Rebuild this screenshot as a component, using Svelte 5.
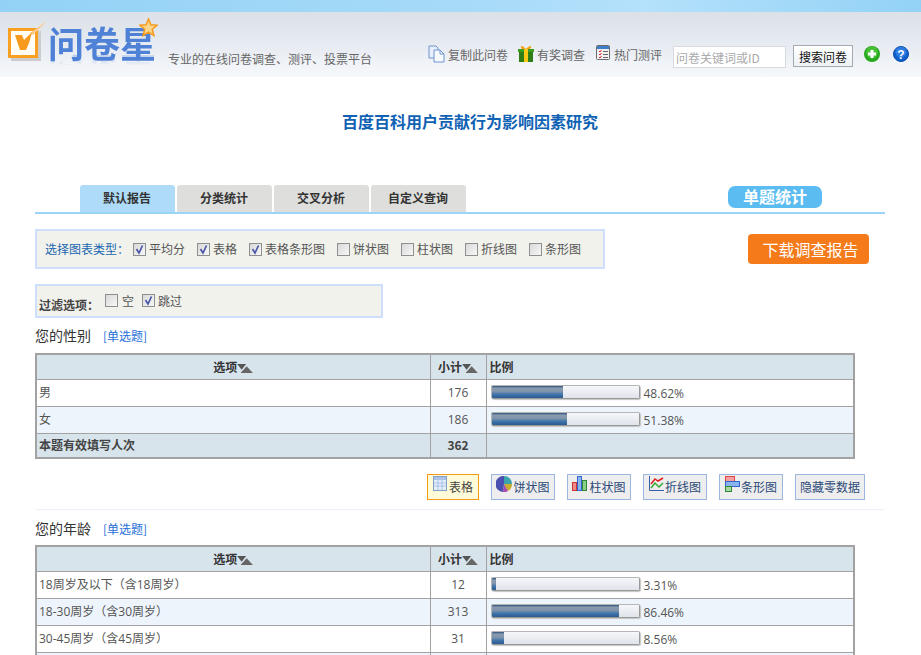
<script>
  const tabs = ['默认报告', '分类统计', '交叉分析', '自定义查询'];
  const types = [
    ['平均分', true], ['表格', true], ['表格条形图', true], ['饼状图', false],
    ['柱状图', false], ['折线图', false], ['条形图', false]
  ];
  const q1 = [['男', 176, 48.62], ['女', 186, 51.38]];
  const q2 = [
    ['18周岁及以下（含18周岁）', 12, 3.31],
    ['18-30周岁（含30周岁）', 313, 86.46],
    ['30-45周岁（含45周岁）', 31, 8.56]
  ];
</script>

{#snippet check(on)}
  <span class="cb">
    {#if on}
      <svg viewBox="0 0 11 11" width="11" height="11"><path d="M2.5 5 L5 9 L8.5 1.5" fill="none" stroke="#4a56a8" stroke-width="1.7" /></svg>
    {/if}
  </span>
{/snippet}

{#snippet sort()}
  <svg class="sort" viewBox="0 0 14 8" width="16" height="9"><path d="M0 0 H8 L4 5 Z" fill="#555" /><path d="M3 8 L8.5 2 L14 8 Z" fill="#666" /></svg>
{/snippet}

{#snippet head()}
  <tr class="hd">
    <th>选项{@render sort()}</th>
    <th>小计{@render sort()}</th>
    <th class="l3">比例</th>
  </tr>
{/snippet}

{#snippet row(r, i)}
  <tr class:alt={i % 2 === 1}>
    <td class="l">{r[0]}</td>
    <td class="c">{r[1]}</td>
    <td class="l3"><div class="pr"><span class="bar"><span class="fill" style="width:{r[2]}%"></span></span><span class="pct">{r[2]}%</span></div></td>
  </tr>
{/snippet}

<div class="page">
  <div class="topband"></div>
  <header>
    <div class="logo">
      <svg class="mark" viewBox="0 0 36 38" width="36" height="38">
        <rect x="3" y="7" width="30" height="30" fill="#ccc" />
        <rect x="1.5" y="5.500" width="27" height="27" fill="#fffdf6" stroke="#f9a023" stroke-width="3" />
        <path d="M22 9 L39 -3 L25 11 Z" fill="#fbc987" />
        <path d="M7 11 L14 11 L16 16 L24 8 L21 19 L18 26 L12 26 Z" fill="#f79a1e" />
      </svg>
      <span class="brand">问卷星</span>
      <svg class="star" viewBox="0 0 20 20" width="19" height="19"><path d="M10 1 L12.5 7.2 L19 7.6 L14 11.8 L15.7 18.5 L10 14.8 L4.3 18.5 L6 11.8 L1 7.6 L7.5 7.2 Z" fill="#fbd58a" stroke="#f39c1f" stroke-width="1.6" /></svg>
    </div>
    <span class="slogan">专业的在线问卷调查、测评、投票平台</span>
    <nav>
      <span class="lnk">
        <svg viewBox="0 0 17 18" width="17" height="18"><path d="M1 1 H8 L10 3 V13 H1 Z" fill="#e8f0fb" stroke="#6f94cf" /><path d="M6 5 H12 L16 9 V17 H6 Z" fill="#f6f9fe" stroke="#6f94cf" /><path d="M12 5 V9 H16" fill="none" stroke="#6f94cf" /></svg>复制此问卷</span>
      <span class="lnk gift">
        <svg viewBox="0 0 16 17" width="16" height="17"><rect x="1" y="5" width="14" height="12" fill="#2e7d16" /><rect x="0" y="4" width="16" height="3" fill="#3f9a20" /><rect x="6" y="4" width="4" height="13" fill="#f6c915" /><path d="M8 4 C4 -1 1 1 4 4 Z M8 4 C12 -1 15 1 12 4 Z" fill="#f2a21a" /></svg>有奖调查</span>
      <span class="lnk chk">
        <svg viewBox="0 0 14 15" width="14" height="15"><rect x=".5" y=".5" width="13" height="14" rx="1" fill="#f2f2f2" stroke="#6a6a6a" /><rect x="1" y="1" width="12" height="3" fill="#3d80c8" /><path d="M3 6 L4 7 L5.500 5 M3 9 L4 10 L5.500 8 M3 12 L4 13 L5.500 11" fill="none" stroke="#d22" /><path d="M7 6.500 H12 M7 9.500 H12 M7 12.500 H12" stroke="#666" /></svg>热门测评</span>
    </nav>
    <input class="search" placeholder="问卷关键词或ID" />
    <button class="sbtn">搜索问卷</button>
    <svg class="plus" viewBox="0 0 16 16" width="16" height="16"><circle cx="8" cy="8" r="8" fill="#25a81b" /><circle cx="8" cy="6.500" r="6" fill="#5fd04a" opacity=".6" /><path d="M8 4 V12 M4 8 H12" stroke="#fff" stroke-width="3" /></svg>
    <svg class="help" viewBox="0 0 16 16" width="16" height="16"><circle cx="8" cy="8" r="7.500" fill="#1060cc" stroke="#0a4aa8" /><circle cx="8" cy="6" r="5.500" fill="#3f8ff0" opacity=".6" /><text x="8" y="12.500" text-anchor="middle" font-size="12" font-weight="700" fill="#fff" font-family="Liberation Sans, sans-serif">?</text></svg>
  </header>

  <main>
    <h1>百度百科用户贡献行为影响因素研究</h1>

    <div class="tabbar">
      {#each tabs as t, i}
        <span class="tab" class:on={i === 0}>{t}</span>
      {/each}
      <span class="tag">单题统计</span>
    </div>

    <div class="optrow">
      <div class="box types">
        <span class="lbl">选择图表类型：</span>
        {#each types as [name, on]}
          <span class="opt">{@render check(on)}{name}</span>
        {/each}
      </div>
      <button class="dl">下载调查报告</button>
    </div>

    <div class="box filter">
      <b>过滤选项：</b>
      <span class="opt">{@render check(false)}空</span>
      <span class="opt">{@render check(true)}跳过</span>
    </div>

    <div class="qt first">您的性别<a href="#q1">[单选题]</a></div>
    <table>
      <colgroup><col class="c1" /><col class="c2" /><col /></colgroup>
      <tbody>
        {@render head()}
        {#each q1 as r, i}{@render row(r, i)}{/each}
        <tr class="hd tot"><td class="l"><b>本题有效填写人次</b></td><td class="c"><b>362</b></td><td></td></tr>
      </tbody>
    </table>

    <div class="charts">
      <span class="cbtn act">
        <svg viewBox="0 0 14 15" width="14" height="15"><rect x=".5" y=".5" width="13" height="14" fill="#e6eefa" stroke="#7f9fcc" /><rect x="1" y="1" width="12" height="3" fill="#a9c2e6" /><path d="M1 7 H13 M1 10 H13 M5 4 V14 M9 4 V14" stroke="#a9c2e6" /></svg>表格</span>
      <span class="cbtn">
        <svg viewBox="0 0 16 16" width="16" height="16"><path d="M8 8 L8 0 A8 8 0 0 1 16 8 Z" fill="#3aa3ad" /><path d="M8 8 L16 8 A8 8 0 0 1 12 15 Z" fill="#c9ad2c" /><path d="M8 8 L12 15 A8 8 0 0 1 7 16 Z" fill="#a84bb0" /><path d="M8 8 L7 16 A8 8 0 0 1 8 0 Z" fill="#4a4fb0" /></svg>饼状图</span>
      <span class="cbtn">
        <svg viewBox="0 0 16 15" width="16" height="15"><rect x=".5" y="6.500" width="4" height="8" fill="#f08a8a" stroke="#c33" /><rect x="5.500" y=".5" width="4" height="14" fill="#8ab4ee" stroke="#36c" /><rect x="10.500" y="4.500" width="4" height="10" fill="#8ad08a" stroke="#383" /></svg>柱状图</span>
      <span class="cbtn">
        <svg viewBox="0 0 15 15" width="15" height="15"><path d="M.5 0 V14.500 H15" fill="none" stroke="#345ea8" /><path d="M2 8 L6 3 L9 5 L14 2" fill="none" stroke="#d22" stroke-width="1.500" /><path d="M2 12 L6 7 L10 11 L14 7" fill="none" stroke="#3a3" stroke-width="1.500" /></svg>折线图</span>
      <span class="cbtn">
        <svg viewBox="0 0 15 17" width="15" height="17"><rect x=".5" y=".5" width="9" height="5" fill="#f4a0a0" stroke="#d44" /><rect x=".5" y="5.500" width="14" height="5" fill="#8ab4ee" stroke="#36c" /><rect x=".5" y="10.500" width="6" height="5" fill="#a8d8a8" stroke="#383" /></svg>条形图</span>
      <span class="cbtn">隐藏零数据</span>
    </div>

    <div class="qt second">您的年龄<a href="#q2">[单选题]</a></div>
    <table>
      <colgroup><col class="c1" /><col class="c2" /><col /></colgroup>
      <tbody>
        {@render head()}
        {#each q2 as r, i}{@render row(r, i)}{/each}
        <tr class="alt"><td></td><td></td><td></td></tr>
      </tbody>
    </table>
  </main>
</div>

<style>
  :global(body) { margin: 0; background: #fff; overflow: hidden; }
  .page {
    width: 921px; height: 655px; overflow: hidden;
    font: 12px/16px "Noto Sans CJK SC", "Noto Sans", sans-serif;
    color: #555;
  }
  .topband { height: 12px; background: linear-gradient(90deg, #93d2f6, #a6daf8 50%, #b4e1fb 70%, #93d2f6); }
  header {
    height: 65px; display: flex; align-items: flex-start; box-sizing: border-box;
    background: linear-gradient(#dbe1e6, #e4e9f0 40%, #f6f8fb);
  }
  .logo { position: relative; width: 168px; height: 65px; flex: none; }
  .mark { position: absolute; left: 8px; top: 12px; overflow: visible; }
  .brand {
    position: absolute; left: 48px; top: 10px;
    font-size: 36px; line-height: 40px; font-weight: 700; color: #4f82d6;
    -webkit-box-reflect: below -8px linear-gradient(transparent 72%, rgba(255, 255, 255, .35));
  }
  .star { position: absolute; left: 139px; top: 6px; }
  .slogan { margin-top: 39px; color: #666; width: 260px; flex: none; }
  nav { display: flex; margin-top: 31px; flex: none; }
  .lnk { display: flex; align-items: flex-start; color: #666; height: 20px; line-height: 20px; margin-top: 2px; }
  .lnk svg { margin: 0 3px 0 0; }
  .gift { margin-left: 10px; }
  .chk { margin-left: 11px; }
  .chk svg { margin-right: 4px; }
  .search {
    width: 113px; height: 22px; box-sizing: border-box; margin: 34px 0 0 11px; padding: 0 2px;
    border: 1px solid #d6dae0; background: #fff; font: inherit; outline: none;
  }
  .search::placeholder { color: #aaa; opacity: 1; }
  .sbtn {
    width: 60px; height: 22px; box-sizing: border-box; margin: 33px 0 0 7px; padding: 1px 0 0;
    border: 1px solid #a3aab2; background: linear-gradient(#fff, #eef1f5); font: inherit; color: #111;
  }
  .plus { margin: 34px 0 0 11px; }
  .help { margin: 34px 0 0 13px; }

  main { padding: 0 36px 0 35px; }
  h1 { margin: 0; padding-top: 32px; height: 65px; text-align: center; font-size: 16px; line-height: 24px; font-weight: 700; color: #0f62b4; width: 870px; }
  .tabbar {
    display: flex; align-items: flex-start; padding: 11px 0 0 45px; box-sizing: border-box;
    height: 40px; border-bottom: 2px solid #9ad4f7; width: 850px; gap: 2px;
  }
  .tab {
    width: 95px; height: 27px; line-height: 26px; text-align: center; font-weight: 700; color: #333;
    box-sizing: border-box; padding-right: 1px;
    background: #dededc; border-radius: 3px 3px 0 0;
  }
  .tab.on { background: #aedcf8; }
  .tag {
    width: 94px; height: 22px; line-height: 21px; margin: 1px 0 0 260px; text-align: center; border-radius: 7px;
    background: #5abcf0; color: #fff; font-size: 16px; font-weight: 700;
  }
  .box { border: 2px solid #cddffd; background: #f1f2ec; box-sizing: border-box; display: flex; }
  .optrow { display: flex; align-items: flex-start; margin-top: 15px; }
  .types { width: 570px; height: 40px; padding: 8px 0 0 8px; align-items: flex-start; }
  .lbl { color: #1b66b0; margin-right: 4px; line-height: 20px; }
  .opt { display: flex; align-items: flex-start; margin-right: 12px; line-height: 20px; }
  .cb {
    width: 11px; height: 11px; border: 1px solid #8e8f8f; margin: 4px 3px 0 0; display: block; flex: none;
    background: linear-gradient(135deg, #d8d8d8, #f8f8f8);
  }
  .cb svg { display: block; }
  .dl {
    width: 121px; height: 30px; margin: 5px 0 0 143px; border: 0; border-radius: 4px; padding: 0 0 0 4px;
    background: #f47a1a; color: #fff; font: 16px/30px "Noto Sans CJK SC", sans-serif;
  }
  .filter { width: 348px; height: 34px; margin-top: 15px; padding: 5px 0 0 2px; align-items: flex-start; }
  .filter b { font-weight: 700; color: #444; line-height: 24px; margin: 2px 6px 0 0; }
  .filter .opt { margin-right: 8px; }
  .filter .cb { margin-top: 3px; margin-right: 4px; }
  .filter .opt:last-child .cb { margin-right: 3px; }
  .qt { color: #333; font-size: 14px; line-height: 20px; }
  .qt a { margin-left: 12px; color: #1f70d8; font-size: 12px; text-decoration: none; }
  .first { margin-top: 7px; height: 28px; }
  .second { height: 27px; padding-top: 8px; }
  table {
    width: 820px; border-collapse: collapse; table-layout: fixed;
    border: 2px solid #a2a2a2; color: #555;
    font-family: "Open Sans", "Noto Sans CJK SC", sans-serif;
    text-spacing-trim: space-all;
  }
  .c1 { width: 394px; }
  .c2 { width: 56px; }
  th, td { border: 1px solid #a2a2a2; height: 27px; padding: 0; box-sizing: border-box; }
  tr.hd { background: #d8e4ec; }
  tr.hd th { color: #333; font-weight: 700; text-align: center; height: 25px; font-family: "Noto Sans CJK SC", sans-serif; }
  tr.hd th.l3 { text-align: left; }
  tr.alt { background: #edf4fb; }
  .l { padding-left: 2px; text-align: left; }
  .l3 { padding-left: 3px; }
  .c { text-align: center; }
  .sort { vertical-align: -1px; }
  .tot td { height: 25px; }
  .tot b { color: #444; font-family: "Noto Sans CJK SC", sans-serif; }
  .pr { display: flex; align-items: flex-start; }
  .bar {
    display: block; width: 147px; height: 12px; margin: 3px 0 0 1px; position: relative; overflow: hidden;
    border: 1px solid #b5b5b5; border-bottom-color: #999; border-right-color: #999; border-radius: 2px;
    background: linear-gradient(#f6f7fa, #dfe3ea); flex: none;
    box-shadow: 1px 1px 1px #c4c4c4;
  }
  .fill {
    display: block; height: 100%;
    background: linear-gradient(#2d527c, #8a9bb0 18%, #7f93ab 45%, #3f74ac 70%, #2b5b8e);
  }
  .pct { margin: 3px 0 0 4px; font-size: 12px; line-height: 18px; }
  .charts { display: flex; gap: 12px; padding: 15px 0 0 392px; box-sizing: border-box; border-bottom: 1px solid #eef0fb; height: 51px; width: 850px; align-items: flex-start; }
  .cbtn {
    width: 64px; height: 26px; box-sizing: border-box; border: 1px solid #9db6e0; background: #eee; display: flex; align-items: flex-start; justify-content: center;
    color: #2c4a78; line-height: 24px; white-space: nowrap;
  }
  .cbtn svg { flex: none; margin-top: 1px; margin-right: 1px; }
  .cbtn:last-child { width: 70px; }
  .cbtn.act { width: 52px; border: 1px solid #f59b14; background: #fffbd8; color: #444; }
  .cbtn.act svg { margin-right: 2px; }
</style>
